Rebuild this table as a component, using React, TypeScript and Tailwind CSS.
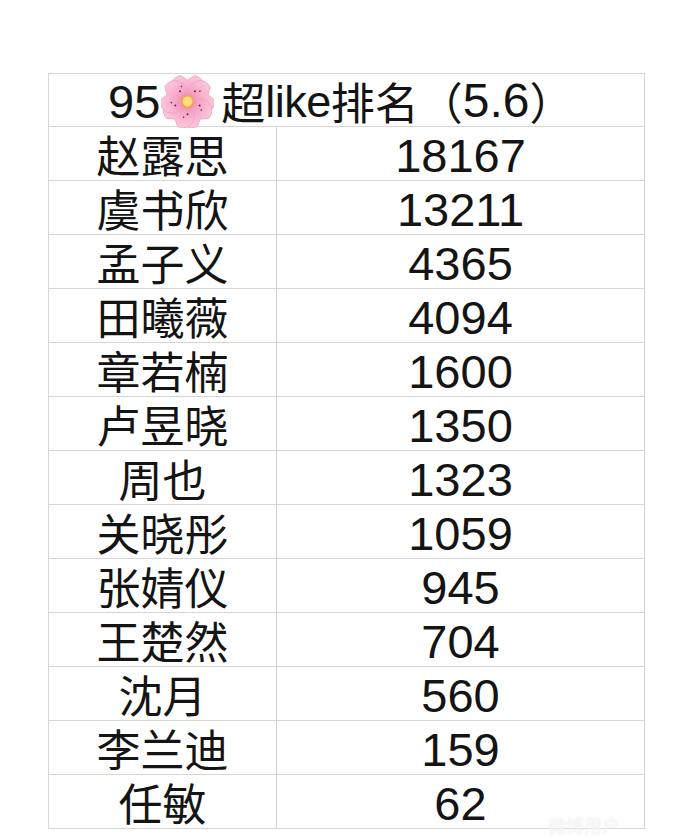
const rows: [string, string][] = [
  ["赵露思", "18167"],
  ["虞书欣", "13211"],
  ["孟子义", "4365"],
  ["田曦薇", "4094"],
  ["章若楠", "1600"],
  ["卢昱晓", "1350"],
  ["周也", "1323"],
  ["关晓彤", "1059"],
  ["张婧仪", "945"],
  ["王楚然", "704"],
  ["沈月", "560"],
  ["李兰迪", "159"],
  ["任敏", "62"],
];

const CJK = "font-['Noto_Sans_CJK_SC',sans-serif]";
const NUM = "font-['Liberation_Sans','Noto_Sans_CJK_SC',sans-serif]";

function Blossom() {
  const petal = "M0,0 C-21,-3 -21,-24 -7,-26.5 L0,-22 L7,-26.5 C21,-24 21,-3 0,0 Z";
  return (
    <svg width="53" height="53" viewBox="-27 -27 54 54" className="mx-[1px] inline-block">
      <defs>
        <radialGradient id="pg" cx="0" cy="0" r="27" gradientUnits="userSpaceOnUse">
          <stop offset="0" stopColor="#ee6fa6" />
          <stop offset="0.4" stopColor="#f5a3c6" />
          <stop offset="1" stopColor="#fac8dc" />
        </radialGradient>
      </defs>
      {[0, 72, 144, 216, 288].map((a) => (
        <path key={a} d={petal} fill="url(#pg)" stroke="#eea0c2" strokeWidth="0.8" transform={`rotate(${a})`} />
      ))}
      {[0, 72, 144, 216, 288].map((a) => (
        <g key={"d" + a} transform={`rotate(${a + 36})`}>
          <circle cx="0" cy="-13" r="1" fill="#7a1838" />
          <circle cx="4" cy="-16" r="0.8" fill="#7a1838" />
        </g>
      ))}
      <circle r="7" fill="#f2a25c" />
      <circle r="5" fill="#fadc7a" />
    </svg>
  );
}

export default function App() {
  return (
    <div className="relative min-h-[838px] bg-white pl-[48px] pt-[73px] text-[#141414]">
      <div className="w-[597px] border-l border-t border-[#d6d6d6]">
        <div className="flex h-[53px] items-center border-r border-b border-[#d6d6d6] pt-[2px] pl-[59px]">
          <span className={`${NUM} text-[47px] leading-none`}>95</span>
          <Blossom />
          <span className={`${CJK} ml-[6px] text-[44px] leading-none`}>超</span>
          <span className={`${NUM} text-[45px] leading-none tracking-[-0.5px]`}>like</span>
          <span className={`${CJK} text-[44px] leading-none`}>排名（</span>
          <span className={`${NUM} text-[48px] leading-none`}>5.6</span>
          <span className={`${CJK} text-[44px] leading-none`}>）</span>
        </div>
        <div className="grid grid-cols-[228px_368px]">
          {rows.map(([name, score]) => (
            <div key={name} className="contents">
              <div
                className={`${CJK} flex h-[54px] items-center justify-center border-r border-b border-[#d6d6d6] text-[44px] leading-none`}
              >
                {name}
              </div>
              <div
                className={`${NUM} flex h-[54px] items-center justify-center border-r border-b border-[#d6d6d6] pt-[3px] text-[47px] leading-none`}
              >
                {score}
              </div>
            </div>
          ))}
        </div>
      </div>
      <div className={`${CJK} pointer-events-none absolute left-[548px] top-[812px] text-[18px] font-bold text-[#f3f3f3] blur-[1px]`}>
        微博用户
      </div>
    </div>
  );
}
